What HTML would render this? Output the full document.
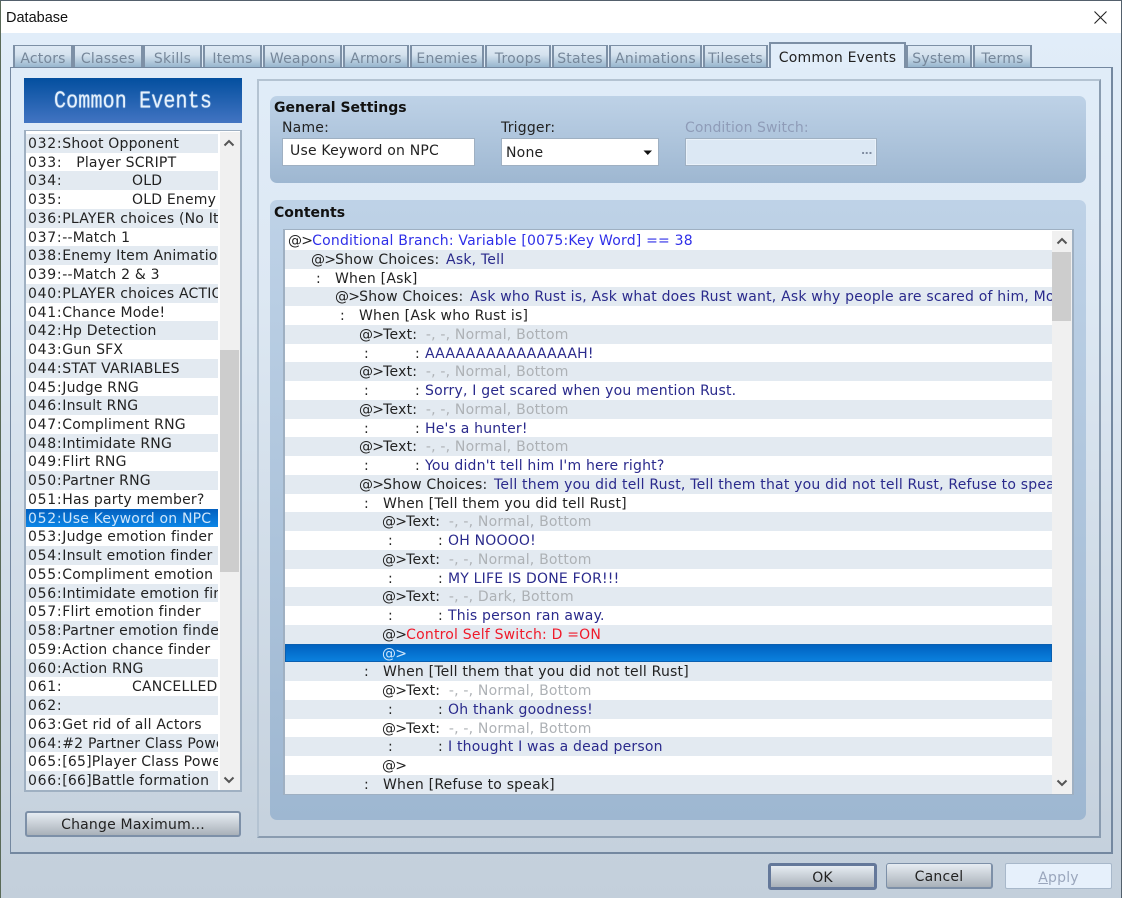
<!DOCTYPE html>
<html><head><meta charset="utf-8"><style>
html,body{margin:0;padding:0}
body{width:1122px;height:898px;overflow:hidden;position:relative;background:#fff;font-family:"DejaVu Sans","Liberation Sans",sans-serif;font-size:14px;letter-spacing:.2px;color:#222}
.a{position:absolute;box-sizing:border-box;white-space:nowrap}
#client{left:1px;top:33px;width:1120px;height:865px;background:linear-gradient(#e1edf9 0%,#dde8f3 30%,#c3cfdb 100%)}
.tab{position:absolute;box-sizing:border-box;top:45px;height:23px;border:1px solid #7d90a6;border-width:1px 2px 0 2px;background:linear-gradient(#dfeaf5,#d5e2ee 40%,#93b2cb);color:#76879a;text-align:center;line-height:27px;font-size:14px}
.tab.on{top:42px;height:26px;background:#e1edf9;color:#222;line-height:28px;z-index:3;border-color:#7c8fa5;border-top-width:2px}
.group{background:linear-gradient(#bed2e7,#9eb7d1);border-radius:7px}
.rows{position:absolute;overflow:hidden}
.r{position:relative;white-space:nowrap}
.r:nth-child(even){background:#e3eaf1}
.list .r{height:18.735px;line-height:21px;padding-left:2px;box-sizing:border-box;overflow:hidden}
.list .r:nth-child(odd){background:#e3eaf1}
.list .r:nth-child(even){background:#fff}
.list .r.sel{background:linear-gradient(#0360bf,#0c86e6);color:#cfe6fb}
.list i{letter-spacing:.7px}
.c .r{height:18.76px;line-height:20px}
.c .r.sel{background:linear-gradient(#0060bd,#0b82e0);color:#cfe6fb;outline:1px solid #0a5fb0;outline-offset:-1px}
.c span{position:absolute;top:0}
.at{letter-spacing:-.8px}
.n{color:#2a2a8c}.g{color:#adb1b5;margin-left:4px}.b{color:#2f2fe8}.rd{color:#f01a2a}
.s{margin-left:2px}
i{font-style:normal}
.t{font-weight:bold;font-size:14px;letter-spacing:0;color:#111}
.btn{position:absolute;box-sizing:border-box;border:2px solid #7d90a8;border-radius:3px;background:linear-gradient(#e6ecf2,#a9b1b9);text-align:center;color:#222}
.sb{position:absolute;background:#f0f0f0}
.th{position:absolute;background:#cdcdcd}
</style></head><body>
<div class="a" style="left:0;top:0;width:1122px;height:1px;background:#53606c"></div>
<div class="a" style="left:6px;top:10px;font-family:'Liberation Sans',sans-serif;font-size:14.5px;letter-spacing:0;color:#111">Database</div>
<svg class="a" style="left:1093px;top:10px" width="15" height="15"><path d="M1.5 1.5L13.5 13.5M13.5 1.5L1.5 13.5" stroke="#222" stroke-width="1.1" fill="none"/></svg>
<div class="a" id="client"></div>
<div class="a" style="left:0;top:1px;width:1px;height:897px;background:#5a6a58"></div>
<div class="a" style="left:1121px;top:1px;width:1px;height:897px;background:#53606c"></div>

<div class="a" style="left:10px;top:67px;width:1103px;height:787px;border:1px solid #7488a0;border-width:1px 2px 2px 1px;z-index:2"></div>

<div class="tab" style="left:13px;width:60px">Actors</div>
<div class="tab" style="left:73px;width:70px">Classes</div>
<div class="tab" style="left:143px;width:59px">Skills</div>
<div class="tab" style="left:203px;width:59px">Items</div>
<div class="tab" style="left:263px;width:79px">Weapons</div>
<div class="tab" style="left:343px;width:66px">Armors</div>
<div class="tab" style="left:410px;width:74px">Enemies</div>
<div class="tab" style="left:485px;width:66px">Troops</div>
<div class="tab" style="left:552px;width:56px">States</div>
<div class="tab" style="left:609px;width:93px">Animations</div>
<div class="tab" style="left:703px;width:65px">Tilesets</div>
<div class="tab on" style="left:769px;width:137px">Common Events</div>
<div class="tab" style="left:906px;width:66px">System</div>
<div class="tab" style="left:973px;width:59px">Terms</div>

<div class="a" style="left:24px;top:78px;width:218px;height:45px;background:linear-gradient(#034f9f,#4274c2);color:#e6f1fc;font-family:'Liberation Mono',monospace;font-size:20px;letter-spacing:.15px;text-align:center;line-height:50px"><span style="display:inline-block;transform:scaleY(1.18);text-shadow:0 0 1px #cfe4fa">Common Events</span></div>

<div class="a" style="left:24px;top:130px;width:218px;height:662px;background:#fff;border:1px solid #9fb0c2;border-width:1px 2px 2px 2px"></div>
<div class="rows list" style="left:26px;top:134px;width:192px;height:656px">
<div class="r"><i>032:</i>Shoot Opponent</div>
<div class="r"><i>033:</i>&nbsp;&nbsp;&nbsp;Player SCRIPT</div>
<div class="r"><i>034:</i>&nbsp;&nbsp;&nbsp;&nbsp;&nbsp;&nbsp;&nbsp;&nbsp;&nbsp;&nbsp;&nbsp;&nbsp;&nbsp;&nbsp;&nbsp;OLD</div>
<div class="r"><i>035:</i>&nbsp;&nbsp;&nbsp;&nbsp;&nbsp;&nbsp;&nbsp;&nbsp;&nbsp;&nbsp;&nbsp;&nbsp;&nbsp;&nbsp;&nbsp;OLD Enemy</div>
<div class="r"><i>036:</i>PLAYER choices (No Items)</div>
<div class="r"><i>037:</i>--Match 1</div>
<div class="r"><i>038:</i>Enemy Item Animation</div>
<div class="r"><i>039:</i>--Match 2 &amp; 3</div>
<div class="r"><i>040:</i>PLAYER choices ACTION</div>
<div class="r"><i>041:</i>Chance Mode!</div>
<div class="r"><i>042:</i>Hp Detection</div>
<div class="r"><i>043:</i>Gun SFX</div>
<div class="r"><i>044:</i>STAT VARIABLES</div>
<div class="r"><i>045:</i>Judge RNG</div>
<div class="r"><i>046:</i>Insult RNG</div>
<div class="r"><i>047:</i>Compliment RNG</div>
<div class="r"><i>048:</i>Intimidate RNG</div>
<div class="r"><i>049:</i>Flirt RNG</div>
<div class="r"><i>050:</i>Partner RNG</div>
<div class="r"><i>051:</i>Has party member?</div>
<div class="r sel"><i>052:</i>Use Keyword on NPC</div>
<div class="r"><i>053:</i>Judge emotion finder</div>
<div class="r"><i>054:</i>Insult emotion finder</div>
<div class="r"><i>055:</i>Compliment emotion finder</div>
<div class="r"><i>056:</i>Intimidate emotion finder</div>
<div class="r"><i>057:</i>Flirt emotion finder</div>
<div class="r"><i>058:</i>Partner emotion finder</div>
<div class="r"><i>059:</i>Action chance finder</div>
<div class="r"><i>060:</i>Action RNG</div>
<div class="r"><i>061:</i>&nbsp;&nbsp;&nbsp;&nbsp;&nbsp;&nbsp;&nbsp;&nbsp;&nbsp;&nbsp;&nbsp;&nbsp;&nbsp;&nbsp;&nbsp;CANCELLED</div>
<div class="r"><i>062:</i></div>
<div class="r"><i>063:</i>Get rid of all Actors</div>
<div class="r"><i>064:</i>#2 Partner Class Power</div>
<div class="r"><i>065:</i>[65]Player Class Power</div>
<div class="r"><i>066:</i>[66]Battle formation</div>
</div>
<div class="sb" style="left:220px;top:132px;width:20px;height:658px"></div>
<div class="th" style="left:220px;top:350px;width:19px;height:222px"></div>
<svg class="a" style="left:222px;top:138px" width="14" height="10"><path d="M2.5 7.5L7 3L11.5 7.5" stroke="#555" stroke-width="2" fill="none"/></svg>
<svg class="a" style="left:222px;top:775px" width="14" height="10"><path d="M2.5 2.5L7 7L11.5 2.5" stroke="#555" stroke-width="2" fill="none"/></svg>

<div class="btn" style="left:25px;top:811px;width:216px;height:26px;line-height:25px">Change Maximum...</div>

<div class="a" style="left:257px;top:79px;width:844px;height:759px;border:2px solid #8fa1b4;border-color:#b4c3d2 #8a9cb0 #8a9cb0 #b4c3d2"></div>

<div class="a group" style="left:270px;top:96px;width:816px;height:87px"></div>
<div class="a t" style="left:274px;top:100px">General Settings</div>
<div class="a" style="left:282px;top:120px">Name:</div>
<div class="a" style="left:282px;top:138px;width:193px;height:28px;background:#fff;border:1px solid #9fb0c2;padding-left:7px;line-height:24px">Use Keyword on NPC</div>
<div class="a" style="left:501px;top:120px">Trigger:</div>
<div class="a" style="left:501px;top:138px;width:158px;height:28px;background:#fff;border:1px solid #9fb0c2;padding-left:4px;line-height:28px">None</div>
<svg class="a" style="left:642px;top:149px" width="12" height="8"><path d="M1.5 1.5H10L5.75 6Z" fill="#111"/></svg>
<div class="a" style="left:685px;top:120px;color:#8f9cb8;letter-spacing:.08px">Condition Switch:</div>
<div class="a" style="left:685px;top:138px;width:192px;height:28px;background:#dce8f4;border:1px solid #9fb0c2;box-shadow:inset 0 0 0 1px #eaf2fa"></div>
<div class="a" style="left:861px;top:145px;color:#7f8ca0;font-size:11px;font-weight:bold;line-height:12px;letter-spacing:-.5px">...</div>

<div class="a group" style="left:270px;top:200px;width:816px;height:620px"></div>
<div class="a t" style="left:274px;top:205px">Contents</div>
<div class="a" style="left:283px;top:229px;width:791px;height:566px;background:#fff;border:1px solid #9fb0c2;border-width:1px 2px 2px 2px"></div>
<div class="rows c" style="left:285px;top:231px;width:767px;height:563px">
<div class="r"><span style="left:3px"><i class="at">@&gt;</i><i class="b">Conditional Branch: Variable [0075:Key Word] == 38</i></span></div>
<div class="r"><span style="left:26px"><i class="at">@&gt;</i>Show Choices: <i class="n s">Ask, Tell</i></span></div>
<div class="r"><span style="left:31px">:</span><span style="left:50px">When [Ask]</span></div>
<div class="r"><span style="left:50px"><i class="at">@&gt;</i>Show Choices: <i class="n s">Ask who Rust is, Ask what does Rust want, Ask why people are scared of him, More</i></span></div>
<div class="r"><span style="left:55px">:</span><span style="left:74px">When [Ask who Rust is]</span></div>
<div class="r"><span style="left:74px"><i class="at">@&gt;</i>Text: <i class="g">-, -, Normal, Bottom</i></span></div>
<div class="r"><span style="left:79px">:</span><span style="left:130px">:</span><span class="n" style="left:140px">AAAAAAAAAAAAAAAH!</span></div>
<div class="r"><span style="left:74px"><i class="at">@&gt;</i>Text: <i class="g">-, -, Normal, Bottom</i></span></div>
<div class="r"><span style="left:79px">:</span><span style="left:130px">:</span><span class="n" style="left:140px">Sorry, I get scared when you mention Rust.</span></div>
<div class="r"><span style="left:74px"><i class="at">@&gt;</i>Text: <i class="g">-, -, Normal, Bottom</i></span></div>
<div class="r"><span style="left:79px">:</span><span style="left:130px">:</span><span class="n" style="left:140px">He's a hunter!</span></div>
<div class="r"><span style="left:74px"><i class="at">@&gt;</i>Text: <i class="g">-, -, Normal, Bottom</i></span></div>
<div class="r"><span style="left:79px">:</span><span style="left:130px">:</span><span class="n" style="left:140px">You didn't tell him I'm here right?</span></div>
<div class="r"><span style="left:74px"><i class="at">@&gt;</i>Show Choices: <i class="n s">Tell them you did tell Rust, Tell them that you did not tell Rust, Refuse to speak</i></span></div>
<div class="r"><span style="left:79px">:</span><span style="left:98px">When [Tell them you did tell Rust]</span></div>
<div class="r"><span style="left:97px"><i class="at">@&gt;</i>Text: <i class="g">-, -, Normal, Bottom</i></span></div>
<div class="r"><span style="left:103px">:</span><span style="left:153px">:</span><span class="n" style="left:163px">OH NOOOO!</span></div>
<div class="r"><span style="left:97px"><i class="at">@&gt;</i>Text: <i class="g">-, -, Normal, Bottom</i></span></div>
<div class="r"><span style="left:103px">:</span><span style="left:153px">:</span><span class="n" style="left:163px">MY LIFE IS DONE FOR!!!</span></div>
<div class="r"><span style="left:97px"><i class="at">@&gt;</i>Text: <i class="g">-, -, Dark, Bottom</i></span></div>
<div class="r"><span style="left:103px">:</span><span style="left:153px">:</span><span class="n" style="left:163px">This person ran away.</span></div>
<div class="r"><span style="left:97px"><i class="at">@&gt;</i><i class="rd">Control Self Switch: D =ON</i></span></div>
<div class="r sel"><span style="left:97px"><i class="at">@&gt;</i></span></div>
<div class="r"><span style="left:79px">:</span><span style="left:98px">When [Tell them that you did not tell Rust]</span></div>
<div class="r"><span style="left:97px"><i class="at">@&gt;</i>Text: <i class="g">-, -, Normal, Bottom</i></span></div>
<div class="r"><span style="left:103px">:</span><span style="left:153px">:</span><span class="n" style="left:163px">Oh thank goodness!</span></div>
<div class="r"><span style="left:97px"><i class="at">@&gt;</i>Text: <i class="g">-, -, Normal, Bottom</i></span></div>
<div class="r"><span style="left:103px">:</span><span style="left:153px">:</span><span class="n" style="left:163px">I thought I was a dead person</span></div>
<div class="r"><span style="left:97px"><i class="at">@&gt;</i></span></div>
<div class="r"><span style="left:79px">:</span><span style="left:98px">When [Refuse to speak]</span></div>
</div>
<div class="sb" style="left:1052px;top:231px;width:20px;height:563px"></div>
<div class="th" style="left:1052px;top:252px;width:19px;height:69px"></div>
<svg class="a" style="left:1055px;top:236px" width="14" height="10"><path d="M2.5 7.5L7 3L11.5 7.5" stroke="#555" stroke-width="2" fill="none"/></svg>
<svg class="a" style="left:1055px;top:778px" width="14" height="10"><path d="M2.5 2.5L7 7L11.5 2.5" stroke="#555" stroke-width="2" fill="none"/></svg>

<div class="btn" style="left:768px;top:863px;width:109px;height:27px;border:3px solid #64789a;line-height:24px">OK</div>
<div class="btn" style="left:886px;top:863px;width:107px;height:26px;line-height:27px;border-width:1px 2px 2px 1px">Cancel</div>
<div class="btn" style="left:1005px;top:863px;width:107px;height:26px;line-height:28px;background:#e6f0fb;border:1px solid #a8b8ca;color:#9aa6bc;border-radius:2px"><u>A</u>pply</div>
</body></html>
